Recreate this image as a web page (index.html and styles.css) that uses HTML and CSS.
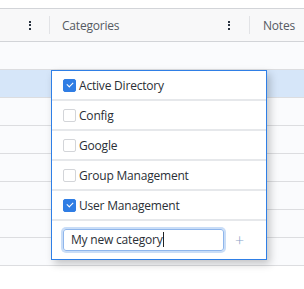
FILE: index.html
```html
<!DOCTYPE html>
<html>
<head>
  <title>Categories</title>
  <link rel="stylesheet" href="styles.css">
</head>
<body>
  <div class="grid">
    <div class="grid-header">
      <div class="col col-first">
        <span class="kebab"><i></i><i></i><i></i></span>
      </div>
      <div class="col col-cats">
        <span class="col-title">Categories</span>
        <span class="kebab"><i></i><i></i><i></i></span>
      </div>
      <div class="col col-notes">
        <span class="col-title">Notes</span>
      </div>
    </div>
    <div class="grid-row"></div>
    <div class="grid-row selected"></div>
    <div class="grid-row"></div>
    <div class="grid-row"></div>
    <div class="grid-row"></div>
    <div class="grid-row"></div>
    <div class="grid-row"></div>
    <div class="grid-row"></div>

    <div class="category-popup">
      <label class="cat-item">
        <span class="check checked"></span>
        <span>Active Directory</span>
      </label>
      <label class="cat-item">
        <span class="check"></span>
        <span>Config</span>
      </label>
      <label class="cat-item">
        <span class="check"></span>
        <span>Google</span>
      </label>
      <label class="cat-item">
        <span class="check"></span>
        <span>Group Management</span>
      </label>
      <label class="cat-item">
        <span class="check checked"></span>
        <span>User Management</span>
      </label>
      <div class="new-cat">
        <div class="new-cat-input">My new category<span class="caret"></span></div>
        <span class="add-btn">+</span>
      </div>
    </div>
  </div>
</body>
</html>
```

FILE: styles.css
```css
body {
  margin: 0;
  font-family: "Open Sans", "Noto Sans", sans-serif;
  font-size: 12px;
  letter-spacing: -0.2px;
  color: #333;
  background: #fff;
}
.grid {
  position: relative;
  padding-top: 8px;
  padding-bottom: 24px;
}
.grid-header {
  display: flex;
  height: 32px;
  background: #f8f8f9;
  border-top: 1px solid #d2d4d8;
  border-bottom: 1px solid #d2d4d8;
}
.col {
  display: flex;
  align-items: center;
}
.col-first {
  width: 49px;
  justify-content: flex-end;
}
.col-first .kebab {
  margin-right: 18px;
}
.col-cats {
  width: 200px;
  box-sizing: border-box;
  border-left: 1px solid #e2e3e6;
  margin: 7px 0;
  padding-left: 12px;
}
.col-cats .kebab {
  margin-left: auto;
  margin-right: 19px;
}
.col-notes {
  border-left: 1px solid #e2e3e6;
  margin: 7px 0;
  padding-left: 13px;
}
.col-title {
  color: #555a62;
  font-size: 12px;
  padding-top: 1px;
}
.kebab {
  display: flex;
  flex-direction: column;
  gap: 1.5px;
}
.kebab i {
  display: block;
  width: 2px;
  height: 2px;
  background: #2b3441;
}
.grid-row {
  height: 27px;
  border-bottom: 1px solid #dcdde0;
  background: #fafbfd;
}
.grid-row:first-of-type {
  background: #fff;
}
.grid-row.selected {
  background: #d6e6f9;
}

.category-popup {
  position: absolute;
  left: 51px;
  top: 70px;
  width: 214px;
  background: #fff;
  border: 1px solid #2f7fe6;
  box-shadow: 3px 4px 8px rgba(0, 0, 0, 0.22);
}
.cat-item {
  display: flex;
  align-items: center;
  height: 28px;
  padding-left: 11px;
  border-bottom: 2px solid #e6e8eb;
  color: #2a2f36;
}
.check {
  width: 11px;
  height: 11px;
  border: 1px solid #d3d5d9;
  border-radius: 2px;
  margin-right: 3px;
  position: relative;
  background: #fff;
}
.check.checked {
  background: #2f7de4;
  border-color: #2f7de4;
}
.check.checked::after {
  content: "";
  position: absolute;
  left: 3px;
  top: 2px;
  width: 5px;
  height: 3px;
  border-left: 1.5px solid #fff;
  border-bottom: 1.5px solid #fff;
  transform: rotate(-45deg);
}
.new-cat {
  display: flex;
  align-items: center;
  height: 38px;
  padding-left: 11px;
}
.new-cat-input {
  width: 148px;
  height: 20px;
  line-height: 20px;
  padding: 0 4px 0 7px;
  border: 1px solid #8fb6ec;
  border-radius: 3px;
  box-shadow: 0 0 0 2px #c9ddf7;
  color: #2a2f36;
}
.caret {
  display: inline-block;
  width: 1px;
  height: 15px;
  background: #222;
  vertical-align: -3px;
}
.add-btn {
  margin-left: 11px;
  color: #8aa4c8;
  font-size: 16px;
  font-weight: 300;
}
```
